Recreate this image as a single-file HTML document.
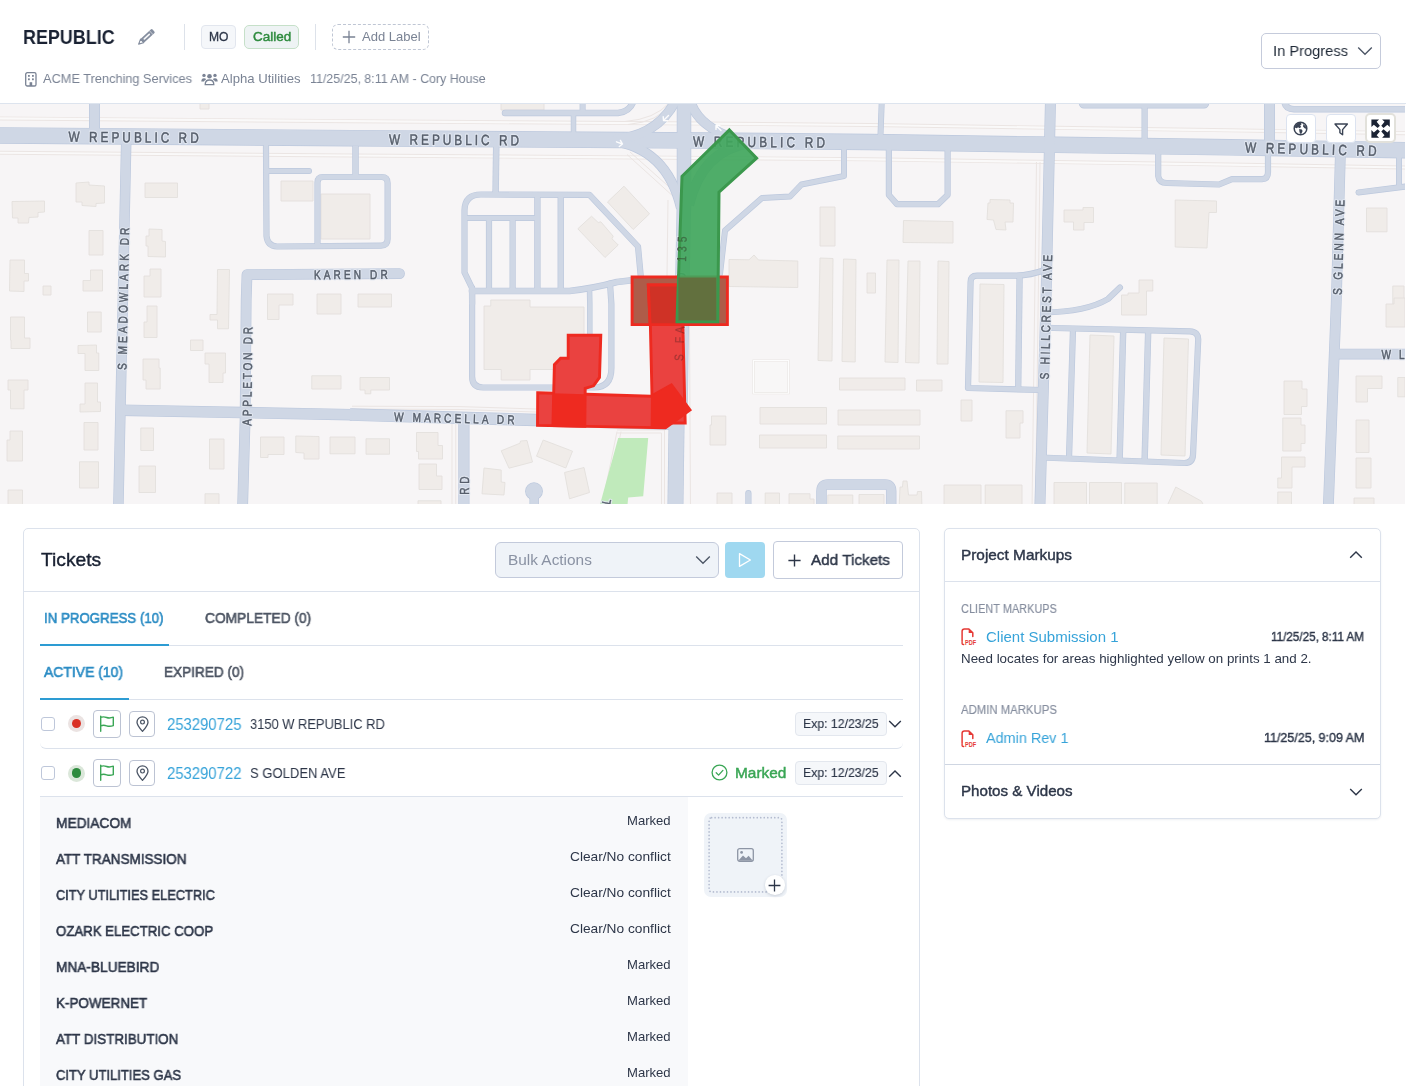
<!DOCTYPE html>
<html lang="en"><head><meta charset="utf-8"><title>REPUBLIC</title>
<style>
html,body{margin:0;padding:0;background:#fff;}
body{width:1406px;height:1086px;overflow:hidden;position:relative;font-family:"Liberation Sans",sans-serif;color:#2d3648;}
.t{will-change:transform;position:absolute;white-space:nowrap;line-height:1;transform-origin:0 0;font-family:"Liberation Sans",sans-serif;}
.a{position:absolute;box-sizing:border-box;}
svg{position:absolute;overflow:visible;}

</style></head>
<body>
<div class="a" style="left:0;top:0;width:1406px;height:103px;background:#fff"></div>
<span class="t" style="left:23.10px;top:26.87px;font-size:20px;color:#1a2233;font-weight:700;transform:scaleX(0.8970);">REPUBLIC</span>
<svg style="left:0;top:0" width="200" height="60" viewBox="0 0 200 60"><g transform="translate(138.4,44.3) rotate(-42.4)"><rect x="4.6" y="-2.6" width="15.8" height="5.2" rx="1.3" fill="#858e9f"/><rect x="7.2" y="-0.85" width="8.4" height="1.7" rx="0.85" fill="#fff" opacity="0.92"/><rect x="17" y="-2.6" width="0.7" height="5.2" fill="#fff" opacity="0.55"/><path d="M5,-2.35 L0.3,0 L5,2.35 Z" fill="#fff" stroke="#858e9f" stroke-width="1.1" stroke-linejoin="round"/><path d="M0.2,0 L2.2,-0.95 L2.2,0.95 Z" fill="#858e9f"/></g></svg>
<div class="a" style="left:184px;top:24.4px;width:1px;height:25.4px;background:#dde2ea"></div>
<div class="a" style="left:201px;top:25px;width:35.2px;height:24px;background:#f5f7fa;border:1px solid #e2e6ee;border-radius:4px"></div>
<span class="t" style="left:208.70px;top:31.14px;font-size:12px;color:#2d3648;-webkit-text-stroke:0.3px #2d3648;transform:scaleX(1.0081);">MO</span>
<div class="a" style="left:244px;top:25px;width:54.6px;height:24px;background:#eef3f4;border:1px solid #c6e0c9;border-radius:5px"></div>
<span class="t" style="left:252.60px;top:30.30px;font-size:13px;color:#2e8b3e;-webkit-text-stroke:0.45px #2e8b3e;transform:scaleX(1.0364);">Called</span>
<div class="a" style="left:315px;top:24.4px;width:1px;height:25.4px;background:#dde2ea"></div>
<div class="a" style="left:332.4px;top:24px;width:96.4px;height:25.7px;border:1px dashed #bfc6d4;border-radius:6px"></div>
<svg style="left:342px;top:30px" width="14" height="14" viewBox="0 0 14 14"><path d="M7,0.8 V13.2 M0.8,7 H13.2" stroke="#7a8394" stroke-width="1.3" fill="none"/></svg>
<span class="t" style="left:361.50px;top:30.30px;font-size:13px;color:#7a8394;">Add Label</span>
<svg style="left:25px;top:72px" width="12" height="15" viewBox="0 0 12 15"><rect x="0.7" y="0.7" width="10.3" height="13.3" rx="1.6" fill="none" stroke="#7a8394" stroke-width="1.3"/><g fill="#7a8394"><rect x="3" y="3" width="1.8" height="1.8"/><rect x="7" y="3" width="1.8" height="1.8"/><rect x="3" y="6.4" width="1.8" height="1.8"/><rect x="7" y="6.4" width="1.8" height="1.8"/><rect x="4.6" y="10.2" width="2.6" height="3.8"/></g></svg>
<span class="t" style="left:43.20px;top:71.80px;font-size:13px;color:#7a8394;transform:scaleX(0.9820);">ACME Trenching Services</span>
<svg style="left:201px;top:72px" width="17" height="14" viewBox="0 0 17 14"><g fill="#7a8394"><circle cx="8.5" cy="4.2" r="2.3"/><path d="M4.2,12.6 Q4.2,8 8.5,8 Q12.8,8 12.8,12.6 Z" fill="none" stroke="#7a8394" stroke-width="1.3"/><circle cx="3" cy="3.4" r="1.7"/><circle cx="14" cy="3.4" r="1.7"/><path d="M0.3,9.6 Q0.3,6.2 3,6.2 Q4.6,6.2 5.2,7.3 Q3.2,8.4 3,9.6 Z"/><path d="M16.7,9.6 Q16.7,6.2 14,6.2 Q12.4,6.2 11.8,7.3 Q13.8,8.4 14,9.6 Z"/></g></svg>
<span class="t" style="left:221.00px;top:71.80px;font-size:13px;color:#7a8394;transform:scaleX(1.0093);">Alpha Utilities</span>
<span class="t" style="left:309.80px;top:71.80px;font-size:13px;color:#7a8394;transform:scaleX(0.9559);">11/25/25, 8:11 AM - Cory House</span>
<div class="a" style="left:1261px;top:33px;width:119.6px;height:35.6px;border:1px solid #c5cbdb;border-radius:5px;background:#fff"></div>
<span class="t" style="left:1273.00px;top:43.30px;font-size:15px;color:#1f2937;transform:scaleX(0.9778);">In Progress</span>
<svg style="left:1357px;top:46px" width="16" height="10" viewBox="0 0 16 10"><path d="M1.2,1.5 L8,8.3 L14.8,1.5" fill="none" stroke="#4b5565" stroke-width="1.3"/></svg>
<svg style="left:0;top:103px;overflow:hidden;will-change:transform" width="1405" height="401" viewBox="0 103 1405 401" font-family="Liberation Sans, sans-serif">
<rect x="0" y="103" width="1405" height="401" fill="#f7f5f6"/>
<polyline points="-5,118.4 352,121.2 704,123.6 870,125.0 1056,127.8 1230,130.3 1410,133.3" fill="none" stroke="#ebe5e3" stroke-width="4"/>
<polyline points="-5,118.4 352,121.2 704,123.6 870,125.0 1056,127.8 1230,130.3 1410,133.3" fill="none" stroke="#faf9f9" stroke-width="2.2"/>
<polyline points="-5,152.7 352,155.5 704,157.9 870,159.3 1056,162.1 1230,164.6 1410,167.6" fill="none" stroke="#ebe5e3" stroke-width="4"/>
<polyline points="-5,152.7 352,155.5 704,157.9 870,159.3 1056,162.1 1230,164.6 1410,167.6" fill="none" stroke="#faf9f9" stroke-width="2.2"/>
<path d="M625,121.5 Q655,119 669,103" fill="none" stroke="#ebe5e3" stroke-width="1"/>
<path d="M628,124.5 Q658,122 672.5,103" fill="none" stroke="#ebe5e3" stroke-width="1"/>
<path d="M617,431.5 L601,510" fill="none" stroke="#ebe5e3" stroke-width="1"/>
<path d="M621,431.5 L605,510" fill="none" stroke="#ebe5e3" stroke-width="1"/>
<path d="M617,430 L664.5,430 L664.5,510" fill="none" stroke="#ebe5e3" stroke-width="1"/>
<path d="M617,433 L661.5,433 L661.5,510" fill="none" stroke="#ebe5e3" stroke-width="1"/>
<path d="M689.5,326 L690.5,510" fill="none" stroke="#ebe5e3" stroke-width="1"/>
<path d="M668,200 L667,276" fill="none" stroke="#ebe5e3" stroke-width="1"/>
<path d="M627,154.5 L674.5,197.5" fill="none" stroke="#ebe5e3" stroke-width="1"/>
<path d="M630,152 L676,193" fill="none" stroke="#ebe5e3" stroke-width="1"/>
<path d="M1036.5,162 L1032,510" fill="none" stroke="#ebe5e3" stroke-width="1"/>
<path d="M1040,162 L1035.5,510" fill="none" stroke="#ebe5e3" stroke-width="1"/>
<path d="M452,422 L452,510" fill="none" stroke="#ebe5e3" stroke-width="1"/>
<path d="M455.75,422 L455.75,510" fill="none" stroke="#ebe5e3" stroke-width="1"/>
<path d="M352,406.2 L460,406.6 L536,409" fill="none" stroke="#ebe5e3" stroke-width="1"/>
<path d="M352,409 L460,409.5 L536,412" fill="none" stroke="#ebe5e3" stroke-width="1"/>
<polygon points="618.2,438.0 648.2,438.0 643.2,496.2 628.2,497.5 627.0,510.0 598.5,510.0" fill="#c0eabb"/>
<g fill="#f0ece9" stroke="#e3e0dc" stroke-width="0.9" stroke-linejoin="miter">
<polygon points="76.0,183.0 89.0,182.0 89.0,185.0 104.5,186.0 104.5,203.0 96.0,203.5 96.0,206.5 82.0,205.5 82.0,202.0 76.0,202.0"/>
<polygon points="12.0,201.5 44.5,201.0 44.5,212.0 38.0,212.5 38.0,217.0 29.0,217.5 28.5,223.0 18.0,223.0 18.0,218.0 12.5,218.0"/>
<polygon points="145.0,183.0 177.5,183.0 177.5,197.5 145.0,197.5"/>
<polygon points="89.0,230.5 103.0,230.5 103.0,255.0 89.0,255.0"/>
<polygon points="149.0,229.0 162.0,229.5 162.0,241.0 165.5,241.5 165.5,257.0 148.0,256.5 148.0,246.0 146.0,246.0 146.0,236.0 149.0,236.0"/>
<polygon points="10.0,260.0 24.5,260.0 24.5,273.5 28.5,273.5 28.5,281.0 24.0,281.0 24.0,291.5 9.5,291.0"/>
<polygon points="43.0,286.0 51.0,286.0 51.0,295.0 43.0,295.0"/>
<polygon points="90.5,270.0 102.5,270.0 102.5,291.0 83.0,291.0 83.0,280.5 90.5,280.5"/>
<polygon points="150.0,269.0 161.0,269.0 161.0,297.0 144.0,297.0 144.0,276.0 150.0,276.0"/>
<polygon points="281.0,181.0 313.0,181.0 313.0,201.0 281.0,201.0"/>
<polygon points="321.0,194.0 370.0,194.0 370.0,239.0 321.0,239.0"/>
<polygon points="200.0,100.0 209.0,100.0 209.0,109.0 200.0,109.0"/>
<polygon points="10.5,317.0 24.5,317.0 24.5,338.0 30.0,338.0 30.0,348.5 11.0,348.5 11.0,340.0 10.5,340.0"/>
<polygon points="87.5,312.0 101.2,312.0 101.2,332.0 87.5,332.0"/>
<polygon points="78.0,345.5 96.5,345.0 96.5,353.0 98.8,353.0 98.8,370.5 85.0,370.5 85.0,353.5 78.0,353.5"/>
<polygon points="8.0,380.0 28.0,380.0 28.0,390.0 24.0,390.0 24.0,408.8 10.5,408.8 10.5,390.0 8.0,390.0"/>
<polygon points="85.0,383.0 97.5,383.0 97.5,402.0 100.5,402.0 100.5,411.5 80.0,412.0 80.0,404.0 85.0,404.0"/>
<polygon points="10.0,431.0 22.5,431.0 22.5,461.0 7.0,461.0 7.0,440.0 10.0,440.0"/>
<polygon points="84.0,422.5 98.0,422.5 98.0,450.0 84.0,450.0"/>
<polygon points="79.5,461.8 98.5,461.8 98.5,488.0 79.5,488.0"/>
<polygon points="8.0,490.0 22.5,490.0 22.5,510.0 8.0,510.0"/>
<polygon points="147.0,306.0 157.0,306.0 157.0,337.5 144.0,337.5 144.0,322.0 147.0,322.0"/>
<polygon points="143.0,359.0 159.0,359.0 159.0,368.0 160.2,368.0 160.2,389.0 146.0,389.0 146.0,380.0 143.0,380.0"/>
<polygon points="140.8,428.0 153.5,428.0 153.5,450.5 140.8,450.5"/>
<polygon points="139.0,466.0 155.5,466.0 155.5,492.5 139.0,492.5"/>
<polygon points="217.5,269.5 229.5,269.5 228.5,328.8 217.5,328.8 217.5,320.0 210.0,320.0 210.0,314.5 217.0,314.5"/>
<polygon points="190.5,340.0 203.0,340.0 203.0,350.5 190.5,350.5"/>
<polygon points="205.0,353.0 225.5,353.0 225.5,373.0 223.0,373.0 223.0,382.5 209.0,382.5 209.0,364.0 205.0,364.0"/>
<polygon points="209.5,439.0 224.0,439.0 224.0,469.0 209.5,469.0"/>
<polygon points="205.0,493.8 219.0,493.8 219.0,510.0 205.0,510.0"/>
<polygon points="267.5,294.0 293.0,294.0 293.0,305.0 279.0,305.0 279.0,319.5 267.5,319.5"/>
<polygon points="317.0,294.0 341.0,294.0 341.0,314.0 317.0,314.0"/>
<polygon points="311.8,375.8 341.0,375.8 341.0,389.0 311.8,389.0"/>
<polygon points="260.5,437.0 284.0,437.0 284.0,454.5 268.0,454.5 268.0,457.5 260.5,457.5"/>
<polygon points="295.8,436.0 319.0,436.5 319.0,459.0 304.0,459.0 304.0,453.0 295.8,452.5"/>
<polygon points="330.0,437.0 355.0,437.0 355.0,453.8 330.0,453.8"/>
<polygon points="358.0,294.0 391.5,294.0 391.5,307.0 358.0,307.0"/>
<polygon points="501.0,100.0 544.0,100.0 544.0,110.0 501.0,110.0"/>
<polygon points="607.5,202.0 624.0,186.2 649.5,213.8 633.2,229.5"/>
<polygon points="577.8,228.8 591.5,216.2 598.2,222.5 600.8,221.8 613.2,236.2 612.0,238.8 618.2,245.0 605.0,257.5"/>
<polygon points="484.0,306.0 490.8,306.0 490.8,300.0 530.0,300.0 530.0,307.0 584.0,307.0 584.0,369.5 530.0,369.5 530.0,380.0 501.2,380.0 501.2,369.5 484.0,369.5"/>
<polygon points="360.0,377.5 389.5,377.5 389.5,390.0 370.8,390.0 370.8,393.8 365.0,393.8 365.0,390.0 360.0,390.0"/>
<polygon points="366.0,438.8 389.5,438.8 389.5,454.2 366.0,454.2"/>
<polygon points="416.5,432.5 438.0,432.5 438.0,445.5 442.5,445.5 442.5,459.0 418.5,459.0 418.5,451.5 416.5,451.5"/>
<polygon points="419.0,464.0 436.5,464.0 436.5,476.0 442.0,476.0 442.0,489.5 419.0,489.5"/>
<polygon points="418.0,500.8 441.0,500.8 441.0,510.0 418.0,510.0"/>
<polygon points="501.2,450.8 520.0,443.2 520.5,441.0 527.0,440.5 532.5,462.0 509.0,468.2"/>
<polygon points="536.5,456.2 543.2,440.0 572.5,451.2 565.8,468.0"/>
<polygon points="482.0,493.8 484.0,468.0 501.2,470.0 501.2,482.0 505.0,482.5 504.0,495.0"/>
<polygon points="564.5,472.5 584.0,467.5 589.5,492.5 569.5,498.8"/>
<polygon points="820.0,207.0 835.0,207.0 835.0,246.0 820.0,246.0"/>
<polygon points="903.5,220.5 953.0,221.5 953.0,243.0 903.0,242.5"/>
<polygon points="990.0,199.5 1010.0,200.0 1010.0,203.0 1013.5,203.0 1013.0,222.0 1005.0,222.0 1006.0,230.0 996.0,229.5 993.5,220.0 987.0,219.5 988.0,203.0 990.0,203.0"/>
<polygon points="729.0,259.5 749.0,259.8 754.0,255.0 758.5,260.0 797.8,261.0 797.8,287.5 729.0,286.5"/>
<polygon points="820.0,258.0 833.0,258.5 832.0,361.0 818.0,360.5"/>
<polygon points="843.5,259.0 856.0,259.5 855.2,362.0 842.0,361.5"/>
<polygon points="867.0,273.0 875.5,273.0 875.5,293.0 867.0,293.0"/>
<polygon points="887.0,260.0 899.0,260.0 898.0,362.5 885.0,362.0"/>
<polygon points="908.0,261.0 920.0,261.0 919.0,363.0 905.5,362.5"/>
<polygon points="938.0,261.0 949.0,261.5 948.0,364.0 937.0,364.0"/>
<polygon points="980.0,284.0 1004.0,284.5 1003.0,382.5 979.0,382.0"/>
<polygon points="839.5,378.0 905.0,378.0 905.0,390.0 839.5,390.0"/>
<polygon points="916.5,380.0 942.0,380.0 942.0,391.0 916.5,391.0"/>
<polygon points="760.0,407.5 826.5,407.5 826.5,424.0 760.0,424.0"/>
<polygon points="838.0,410.0 920.0,410.0 920.0,425.0 838.0,425.0"/>
<polygon points="759.5,435.0 826.5,435.0 826.5,448.0 759.5,448.0"/>
<polygon points="837.8,436.0 919.5,436.0 919.5,449.0 837.8,449.0"/>
<polygon points="711.5,416.0 725.8,416.0 725.8,445.0 710.0,445.0 710.0,425.0 711.5,425.0"/>
<polygon points="961.0,400.0 972.0,400.0 972.0,421.0 961.0,421.0"/>
<polygon points="1006.0,410.8 1023.0,410.8 1023.0,423.0 1020.0,423.0 1020.0,438.0 1006.0,438.0"/>
<polygon points="717.0,493.0 732.0,493.0 732.0,510.0 717.0,510.0"/>
<polygon points="765.2,493.0 779.5,493.0 779.5,510.0 765.2,510.0"/>
<polygon points="789.0,493.8 810.0,493.8 810.0,499.0 814.0,499.0 814.0,510.0 789.0,510.0"/>
<polygon points="827.8,495.0 852.8,495.0 852.8,510.0 827.8,510.0"/>
<polygon points="859.0,494.5 884.0,494.5 884.0,510.0 859.0,510.0"/>
<polygon points="900.0,487.0 902.5,487.0 903.0,481.0 907.0,481.0 908.5,495.0 917.0,495.0 917.5,491.5 921.5,491.5 922.0,510.0 899.0,510.0"/>
<polygon points="944.0,485.0 981.0,485.0 981.0,510.0 944.0,510.0"/>
<polygon points="985.2,485.0 1022.0,485.0 1022.0,510.0 985.2,510.0"/>
<polygon points="1064.0,210.0 1083.0,210.0 1083.0,207.5 1093.5,207.5 1093.5,222.5 1084.0,222.5 1084.0,230.0 1073.5,230.0 1073.5,222.0 1064.0,222.0"/>
<polygon points="1175.2,200.0 1216.5,201.0 1216.5,212.5 1209.0,212.5 1207.0,248.0 1175.2,247.0"/>
<polygon points="1366.5,208.0 1387.0,208.0 1387.0,231.8 1366.5,231.8"/>
<polygon points="1392.8,286.0 1404.0,286.0 1404.0,304.0 1392.8,304.0"/>
<polygon points="1139.0,280.0 1152.8,280.0 1152.8,291.0 1146.5,291.0 1146.5,304.0 1146.5,315.0 1121.5,315.0 1121.5,295.0 1128.0,295.0 1128.0,293.0 1139.0,293.0"/>
<polygon points="1090.0,335.0 1114.0,336.0 1111.0,454.0 1087.0,453.0"/>
<polygon points="1164.0,338.0 1188.5,339.0 1185.0,456.0 1161.0,455.0"/>
<polygon points="1386.0,304.0 1394.0,304.0 1394.0,298.0 1405.0,298.0 1405.0,327.0 1386.0,327.0"/>
<polygon points="1284.0,381.0 1302.0,381.0 1302.0,389.0 1307.0,389.0 1307.0,406.5 1301.5,406.5 1301.5,414.5 1284.0,414.5"/>
<polygon points="1282.8,418.0 1301.0,418.0 1301.0,425.0 1305.0,425.0 1305.0,443.5 1301.0,443.5 1301.0,451.0 1282.8,451.0"/>
<polygon points="1281.5,457.0 1305.0,457.0 1305.0,467.0 1292.0,467.0 1292.0,488.0 1277.8,488.0 1277.8,478.0 1281.5,478.0"/>
<polygon points="1277.8,492.0 1291.5,492.0 1291.5,510.0 1277.8,510.0"/>
<polygon points="1356.0,376.0 1382.0,376.0 1382.0,388.5 1367.5,388.5 1367.5,402.0 1356.0,402.0"/>
<polygon points="1397.8,377.5 1405.0,377.5 1405.0,396.8 1397.8,396.8"/>
<polygon points="1356.0,420.0 1369.0,420.0 1369.0,452.5 1356.0,452.5"/>
<polygon points="1356.0,458.0 1371.0,458.0 1371.0,488.0 1356.0,488.0"/>
<polygon points="1354.0,498.0 1374.0,498.0 1374.0,510.0 1354.0,510.0"/>
<polygon points="1054.0,482.5 1086.5,482.5 1086.5,510.0 1054.0,510.0"/>
<polygon points="1089.5,482.5 1121.5,482.5 1121.5,510.0 1089.5,510.0"/>
<polygon points="1124.8,483.0 1157.2,483.0 1157.2,510.0 1124.8,510.0"/>
<polygon points="1165.2,510.0 1175.8,487.0 1201.5,501.2 1206.0,510.0"/>
</g>
<polygon points="753.5,360.5 788.5,360.5 788.5,393.2 753.5,393.2" fill="#f8f7f7" stroke="#e9e6e3" stroke-width="2.2"/>
<polygon points="753.5,360.5 788.5,360.5 788.5,393.2 753.5,393.2" fill="none" stroke="#fdfdfd" stroke-width="1.1"/>
<g fill="none" stroke="#bcc8dd" stroke-linejoin="round">
<path d="M-5,135.4 L352,138.2 L704,140.6 L870,142 L1056,144.8 L1230,147.3 L1410,150.3" stroke-width="16.5" stroke-linecap="butt"/>
<path d="M684,100 L684,200 L682,300 L680.5,412" stroke-width="14.5" stroke-linecap="butt"/>
<path d="M676.7,412 L675.4,510" stroke-width="16" stroke-linecap="butt"/>
<path d="M612,139.5 Q657,137 676,100" stroke-width="10" stroke-linecap="butt"/>
<path d="M612,141 C650,146 672,170 681,208" stroke-width="10" stroke-linecap="butt"/>
<path d="M690,100 Q697,126 735,139" stroke-width="10" stroke-linecap="butt"/>
<path d="M750,143 Q702,150 689,205" stroke-width="10" stroke-linecap="butt"/>
<path d="M94.5,100 L94.5,132" stroke-width="11" stroke-linecap="butt"/>
<path d="M126.3,138 L122.75,304 L118.3,510" stroke-width="10.5" stroke-linecap="butt"/>
<path d="M120,410.2 L352,414.7" stroke-width="11.5" stroke-linecap="butt"/>
<path d="M350,414.6 L536,420 L680,424" stroke-width="12.5" stroke-linecap="butt"/>
<path d="M242.5,510 L245.1,420 L246.2,300 L247,274.6 L399.5,273.6" stroke-width="10.8" stroke-linecap="round"/>
<path d="M505,112.9 L618,112.9 Q630,112 634,100" stroke-width="6.5" stroke-linecap="round"/>
<path d="M573.5,113 L573.5,133" stroke-width="5.5" stroke-linecap="butt"/>
<path d="M582.6,113 L582.6,100" stroke-width="6" stroke-linecap="butt"/>
<path d="M496.25,145 L495.6,194.5" stroke-width="6.5" stroke-linecap="butt"/>
<path d="M472.1,304 L472,288 L464.5,272.5 L464.5,210 Q465,194.5 481,194.5 L589.5,194.8 L638,246.5 L641,279" stroke-width="6.2" stroke-linecap="round"/>
<path d="M464.5,218 L537,218" stroke-width="6.0" stroke-linecap="butt"/>
<path d="M489,218 L489,291" stroke-width="6.2" stroke-linecap="butt"/>
<path d="M512.6,218 L512.6,291" stroke-width="6.2" stroke-linecap="butt"/>
<path d="M537.4,194.5 L537.4,291" stroke-width="6.4" stroke-linecap="butt"/>
<path d="M560.75,194.5 L560.75,291" stroke-width="6.4" stroke-linecap="butt"/>
<path d="M472,291 L569.5,291 Q595,288 617,282 L634,280" stroke-width="6.6" stroke-linecap="round"/>
<path d="M589.5,288 L589.8,304 L589.8,336" stroke-width="5.5" stroke-linecap="butt"/>
<path d="M610,283.5 L611.4,304 L611.4,368 Q611.4,387.5 594,387.5 L483,387.5 Q472.1,387.5 472.1,376.6 L472.1,288" stroke-width="6.2" stroke-linecap="round"/>
<path d="M266,146 L266.5,236 Q267.5,246 277,246.5 L381,245.6 Q387.6,245.4 387.6,239 L387.6,183 Q387.6,177 381.6,177 L323,177 Q317.5,177 317.5,182.5 L317.5,246" stroke-width="6.2" stroke-linecap="round"/>
<path d="M355.5,146 L355.5,177" stroke-width="6.5" stroke-linecap="butt"/>
<path d="M266,171 L309,171" stroke-width="6" stroke-linecap="round"/>
<path d="M844,150 L844,176 L801.5,184.5 L790,196.5 L762,198 L725,230.5 L720,274" stroke-width="6" stroke-linecap="round"/>
<path d="M888.9,150 L888.9,195 L897,204.2 L938,204.2 L947.6,195 L947.6,150" stroke-width="6.2" stroke-linecap="round"/>
<path d="M881.8,100 L880.5,135" stroke-width="6" stroke-linecap="butt"/>
<path d="M1050.5,100 L1046,300 L1043,400 L1039.8,510" stroke-width="11" stroke-linecap="butt"/>
<path d="M1084,103.2 L1204,103.2" stroke-width="10.5" stroke-linecap="round"/>
<path d="M1144.6,106 L1144.6,140" stroke-width="6.2" stroke-linecap="butt"/>
<path d="M1269.5,100 L1269.5,142" stroke-width="11" stroke-linecap="butt"/>
<path d="M1284,100 Q1285,109.2 1294,109.2 L1410,109.2" stroke-width="6.5" stroke-linecap="butt"/>
<path d="M1158.2,152 L1158.2,176 Q1159,183 1167,183 L1219,184.5 L1232,179.2 L1262,179.2 Q1268,179 1268,172 L1268,152" stroke-width="6.2" stroke-linecap="round"/>
<path d="M1340.5,150 L1336.2,304 L1328.2,510" stroke-width="10.8" stroke-linecap="butt"/>
<path d="M1399,156 L1399,188" stroke-width="6" stroke-linecap="butt"/>
<path d="M1358.5,192.4 L1410,186" stroke-width="6" stroke-linecap="round"/>
<path d="M1335,354 L1410,354" stroke-width="10.75" stroke-linecap="butt"/>
<path d="M1044,327.6 L1054,328 L1190,331.4 Q1198.6,331.8 1198.2,340 L1193,455 Q1192.5,463.2 1184,463 L1054,458 L1040,457.5" stroke-width="6.2" stroke-linecap="round"/>
<path d="M1073,329 L1069,458.5" stroke-width="6.2" stroke-linecap="butt"/>
<path d="M1123.2,330 L1119.6,460.5" stroke-width="6.4" stroke-linecap="butt"/>
<path d="M1148.2,330.5 L1144.6,461.5" stroke-width="6.4" stroke-linecap="butt"/>
<path d="M1044,312.4 Q1086,312 1108,299 L1120,287.5" stroke-width="6" stroke-linecap="round"/>
<path d="M1046,269.5 Q1030,275.6 1015,275.6 L977,275.6 Q970.6,275.6 970.6,282 L968,388 L1041,390" stroke-width="6.2" stroke-linecap="round"/>
<path d="M1019.6,275.6 L1018.2,389" stroke-width="6.3" stroke-linecap="butt"/>
<path d="M821.5,510 L821.5,491 Q821.5,484.4 828,484.4 L885,484.4 Q891.2,484.4 891.2,491 L891.2,510" stroke-width="10.5" stroke-linecap="round"/>
<path d="M748.4,493.2 L748.4,510" stroke-width="6.2" stroke-linecap="round"/>
<path d="M463.9,420 L463.9,510" stroke-width="11.2" stroke-linecap="butt"/>
<path d="M534.2,495 L534.2,510" stroke-width="9.5" stroke-linecap="butt"/>
</g>
<circle cx="534" cy="491.25" r="8.9" fill="#bcc8dd"/>
<g fill="none" stroke="#cfd7e5" stroke-linejoin="round">
<path d="M-5,135.4 L352,138.2 L704,140.6 L870,142 L1056,144.8 L1230,147.3 L1410,150.3" stroke-width="15.20" stroke-linecap="butt"/>
<path d="M684,100 L684,200 L682,300 L680.5,412" stroke-width="13.20" stroke-linecap="butt"/>
<path d="M676.7,412 L675.4,510" stroke-width="14.70" stroke-linecap="butt"/>
<path d="M612,139.5 Q657,137 676,100" stroke-width="8.70" stroke-linecap="butt"/>
<path d="M612,141 C650,146 672,170 681,208" stroke-width="8.70" stroke-linecap="butt"/>
<path d="M690,100 Q697,126 735,139" stroke-width="8.70" stroke-linecap="butt"/>
<path d="M750,143 Q702,150 689,205" stroke-width="8.70" stroke-linecap="butt"/>
<path d="M94.5,100 L94.5,132" stroke-width="9.70" stroke-linecap="butt"/>
<path d="M126.3,138 L122.75,304 L118.3,510" stroke-width="9.20" stroke-linecap="butt"/>
<path d="M120,410.2 L352,414.7" stroke-width="10.20" stroke-linecap="butt"/>
<path d="M350,414.6 L536,420 L680,424" stroke-width="11.20" stroke-linecap="butt"/>
<path d="M242.5,510 L245.1,420 L246.2,300 L247,274.6 L399.5,273.6" stroke-width="9.50" stroke-linecap="round"/>
<path d="M505,112.9 L618,112.9 Q630,112 634,100" stroke-width="5.20" stroke-linecap="round"/>
<path d="M573.5,113 L573.5,133" stroke-width="4.20" stroke-linecap="butt"/>
<path d="M582.6,113 L582.6,100" stroke-width="4.70" stroke-linecap="butt"/>
<path d="M496.25,145 L495.6,194.5" stroke-width="5.20" stroke-linecap="butt"/>
<path d="M472.1,304 L472,288 L464.5,272.5 L464.5,210 Q465,194.5 481,194.5 L589.5,194.8 L638,246.5 L641,279" stroke-width="4.90" stroke-linecap="round"/>
<path d="M464.5,218 L537,218" stroke-width="4.70" stroke-linecap="butt"/>
<path d="M489,218 L489,291" stroke-width="4.90" stroke-linecap="butt"/>
<path d="M512.6,218 L512.6,291" stroke-width="4.90" stroke-linecap="butt"/>
<path d="M537.4,194.5 L537.4,291" stroke-width="5.10" stroke-linecap="butt"/>
<path d="M560.75,194.5 L560.75,291" stroke-width="5.10" stroke-linecap="butt"/>
<path d="M472,291 L569.5,291 Q595,288 617,282 L634,280" stroke-width="5.30" stroke-linecap="round"/>
<path d="M589.5,288 L589.8,304 L589.8,336" stroke-width="4.20" stroke-linecap="butt"/>
<path d="M610,283.5 L611.4,304 L611.4,368 Q611.4,387.5 594,387.5 L483,387.5 Q472.1,387.5 472.1,376.6 L472.1,288" stroke-width="4.90" stroke-linecap="round"/>
<path d="M266,146 L266.5,236 Q267.5,246 277,246.5 L381,245.6 Q387.6,245.4 387.6,239 L387.6,183 Q387.6,177 381.6,177 L323,177 Q317.5,177 317.5,182.5 L317.5,246" stroke-width="4.90" stroke-linecap="round"/>
<path d="M355.5,146 L355.5,177" stroke-width="5.20" stroke-linecap="butt"/>
<path d="M266,171 L309,171" stroke-width="4.70" stroke-linecap="round"/>
<path d="M844,150 L844,176 L801.5,184.5 L790,196.5 L762,198 L725,230.5 L720,274" stroke-width="4.70" stroke-linecap="round"/>
<path d="M888.9,150 L888.9,195 L897,204.2 L938,204.2 L947.6,195 L947.6,150" stroke-width="4.90" stroke-linecap="round"/>
<path d="M881.8,100 L880.5,135" stroke-width="4.70" stroke-linecap="butt"/>
<path d="M1050.5,100 L1046,300 L1043,400 L1039.8,510" stroke-width="9.70" stroke-linecap="butt"/>
<path d="M1084,103.2 L1204,103.2" stroke-width="9.20" stroke-linecap="round"/>
<path d="M1144.6,106 L1144.6,140" stroke-width="4.90" stroke-linecap="butt"/>
<path d="M1269.5,100 L1269.5,142" stroke-width="9.70" stroke-linecap="butt"/>
<path d="M1284,100 Q1285,109.2 1294,109.2 L1410,109.2" stroke-width="5.20" stroke-linecap="butt"/>
<path d="M1158.2,152 L1158.2,176 Q1159,183 1167,183 L1219,184.5 L1232,179.2 L1262,179.2 Q1268,179 1268,172 L1268,152" stroke-width="4.90" stroke-linecap="round"/>
<path d="M1340.5,150 L1336.2,304 L1328.2,510" stroke-width="9.50" stroke-linecap="butt"/>
<path d="M1399,156 L1399,188" stroke-width="4.70" stroke-linecap="butt"/>
<path d="M1358.5,192.4 L1410,186" stroke-width="4.70" stroke-linecap="round"/>
<path d="M1335,354 L1410,354" stroke-width="9.45" stroke-linecap="butt"/>
<path d="M1044,327.6 L1054,328 L1190,331.4 Q1198.6,331.8 1198.2,340 L1193,455 Q1192.5,463.2 1184,463 L1054,458 L1040,457.5" stroke-width="4.90" stroke-linecap="round"/>
<path d="M1073,329 L1069,458.5" stroke-width="4.90" stroke-linecap="butt"/>
<path d="M1123.2,330 L1119.6,460.5" stroke-width="5.10" stroke-linecap="butt"/>
<path d="M1148.2,330.5 L1144.6,461.5" stroke-width="5.10" stroke-linecap="butt"/>
<path d="M1044,312.4 Q1086,312 1108,299 L1120,287.5" stroke-width="4.70" stroke-linecap="round"/>
<path d="M1046,269.5 Q1030,275.6 1015,275.6 L977,275.6 Q970.6,275.6 970.6,282 L968,388 L1041,390" stroke-width="4.90" stroke-linecap="round"/>
<path d="M1019.6,275.6 L1018.2,389" stroke-width="5.00" stroke-linecap="butt"/>
<path d="M821.5,510 L821.5,491 Q821.5,484.4 828,484.4 L885,484.4 Q891.2,484.4 891.2,491 L891.2,510" stroke-width="9.20" stroke-linecap="round"/>
<path d="M748.4,493.2 L748.4,510" stroke-width="4.90" stroke-linecap="round"/>
<path d="M463.9,420 L463.9,510" stroke-width="9.90" stroke-linecap="butt"/>
<path d="M534.2,495 L534.2,510" stroke-width="8.20" stroke-linecap="butt"/>
</g>
<circle cx="534" cy="491.25" r="8.25" fill="#cfd7e5"/>
<g fill="none" stroke="#ffffff" stroke-width="1.4" stroke-linecap="round" stroke-linejoin="round" opacity="0.95">
<path d="M668.5,115.5 L663.5,120.5 M663.2,116.6 L663.5,120.5 L667.4,120.8"/>
<path d="M616.5,141.8 L622.5,144 M619.3,146.5 L622.5,144 L620.4,140.4"/>
<path d="M721,130.5 L716,125.5 M716,129.4 L716,125.5 L719.9,125.5"/>
</g>
<text x="0" y="0" font-size="14.7" textLength="162.7" lengthAdjust="spacing" transform="translate(68.5 141.8) rotate(0.45) scale(0.8 1)" fill="none" stroke="#e4e9f2" stroke-width="2.8" stroke-linejoin="round" opacity="0.9">W REPUBLIC RD</text><text x="0" y="0" font-size="14.7" textLength="162.7" lengthAdjust="spacing" transform="translate(68.5 141.8) rotate(0.45) scale(0.8 1)" fill="#565e6b" stroke="#565e6b" stroke-width="0.5">W REPUBLIC RD</text>
<text x="0" y="0" font-size="14.7" textLength="162.5" lengthAdjust="spacing" transform="translate(389 144.5) rotate(0.35) scale(0.8 1)" fill="none" stroke="#e4e9f2" stroke-width="2.8" stroke-linejoin="round" opacity="0.9">W REPUBLIC RD</text><text x="0" y="0" font-size="14.7" textLength="162.5" lengthAdjust="spacing" transform="translate(389 144.5) rotate(0.35) scale(0.8 1)" fill="#565e6b" stroke="#565e6b" stroke-width="0.5">W REPUBLIC RD</text>
<text x="0" y="0" font-size="14.7" textLength="165.0" lengthAdjust="spacing" transform="translate(693 146.6) rotate(0.45) scale(0.8 1)" fill="none" stroke="#e4e9f2" stroke-width="2.8" stroke-linejoin="round" opacity="0.9">W REPUBLIC RD</text><text x="0" y="0" font-size="14.7" textLength="165.0" lengthAdjust="spacing" transform="translate(693 146.6) rotate(0.45) scale(0.8 1)" fill="#565e6b" stroke="#565e6b" stroke-width="0.5">W REPUBLIC RD</text>
<text x="0" y="0" font-size="14.7" textLength="164.4" lengthAdjust="spacing" transform="translate(1245 152.5) rotate(1.5) scale(0.8 1)" fill="none" stroke="#e4e9f2" stroke-width="2.8" stroke-linejoin="round" opacity="0.9">W REPUBLIC RD</text><text x="0" y="0" font-size="14.7" textLength="164.4" lengthAdjust="spacing" transform="translate(1245 152.5) rotate(1.5) scale(0.8 1)" fill="#565e6b" stroke="#565e6b" stroke-width="0.5">W REPUBLIC RD</text>
<text x="0" y="0" font-size="12.6" textLength="92.1" lengthAdjust="spacing" transform="translate(314 279.2) rotate(-0.3) scale(0.8 1)" fill="none" stroke="#e4e9f2" stroke-width="2.8" stroke-linejoin="round" opacity="0.9">KAREN DR</text><text x="0" y="0" font-size="12.6" textLength="92.1" lengthAdjust="spacing" transform="translate(314 279.2) rotate(-0.3) scale(0.8 1)" fill="#565e6b" stroke="#565e6b" stroke-width="0.5">KAREN DR</text>
<text x="0" y="0" font-size="12.6" textLength="178.0" lengthAdjust="spacing" transform="translate(126.4 370) rotate(-88.95) scale(0.8 1)" fill="none" stroke="#e4e9f2" stroke-width="2.8" stroke-linejoin="round" opacity="0.9">S MEADOWLARK DR</text><text x="0" y="0" font-size="12.6" textLength="178.0" lengthAdjust="spacing" transform="translate(126.4 370) rotate(-88.95) scale(0.8 1)" fill="#565e6b" stroke="#565e6b" stroke-width="0.5">S MEADOWLARK DR</text>
<text x="0" y="0" font-size="12.6" textLength="123.4" lengthAdjust="spacing" transform="translate(251.3 425.75) rotate(-89.4) scale(0.8 1)" fill="none" stroke="#e4e9f2" stroke-width="2.8" stroke-linejoin="round" opacity="0.9">APPLETON DR</text><text x="0" y="0" font-size="12.6" textLength="123.4" lengthAdjust="spacing" transform="translate(251.3 425.75) rotate(-89.4) scale(0.8 1)" fill="#565e6b" stroke="#565e6b" stroke-width="0.5">APPLETON DR</text>
<text x="0" y="0" font-size="12.6" textLength="150.6" lengthAdjust="spacing" transform="translate(394 421.3) rotate(1.43) scale(0.8 1)" fill="none" stroke="#e4e9f2" stroke-width="2.8" stroke-linejoin="round" opacity="0.9">W MARCELLA DR</text><text x="0" y="0" font-size="12.6" textLength="150.6" lengthAdjust="spacing" transform="translate(394 421.3) rotate(1.43) scale(0.8 1)" fill="#565e6b" stroke="#565e6b" stroke-width="0.5">W MARCELLA DR</text>
<text x="0" y="0" font-size="12.6" textLength="155.6" lengthAdjust="spacing" transform="translate(1048.8 379.5) rotate(-88.44) scale(0.8 1)" fill="none" stroke="#e4e9f2" stroke-width="2.8" stroke-linejoin="round" opacity="0.9">S HILLCREST AVE</text><text x="0" y="0" font-size="12.6" textLength="155.6" lengthAdjust="spacing" transform="translate(1048.8 379.5) rotate(-88.44) scale(0.8 1)" fill="#565e6b" stroke="#565e6b" stroke-width="0.5">S HILLCREST AVE</text>
<text x="0" y="0" font-size="12.6" textLength="118.8" lengthAdjust="spacing" transform="translate(1341.7 295) rotate(-88.4) scale(0.8 1)" fill="none" stroke="#e4e9f2" stroke-width="2.8" stroke-linejoin="round" opacity="0.9">S GLENN AVE</text><text x="0" y="0" font-size="12.6" textLength="118.8" lengthAdjust="spacing" transform="translate(1341.7 295) rotate(-88.4) scale(0.8 1)" fill="#565e6b" stroke="#565e6b" stroke-width="0.5">S GLENN AVE</text>
<text x="0" y="0" font-size="12.6" letter-spacing="3.2" transform="translate(1381.5 358.8) scale(0.8 1)" fill="none" stroke="#e4e9f2" stroke-width="2.8" stroke-linejoin="round" opacity="0.9">W LARK</text><text x="0" y="0" font-size="12.6" letter-spacing="3.2" transform="translate(1381.5 358.8) scale(0.8 1)" fill="#565e6b" stroke="#565e6b" stroke-width="0.5">W LARK</text>
<text x="0" y="0" font-size="12.6" textLength="43.8" lengthAdjust="spacing" transform="translate(468.6 511.5) rotate(-90) scale(0.8 1)" fill="none" stroke="#e4e9f2" stroke-width="2.8" stroke-linejoin="round" opacity="0.9">S RD</text><text x="0" y="0" font-size="12.6" textLength="43.8" lengthAdjust="spacing" transform="translate(468.6 511.5) rotate(-90) scale(0.8 1)" fill="#565e6b" stroke="#565e6b" stroke-width="0.5">S RD</text>
<text x="0" y="0" font-size="12.6" textLength="155.6" lengthAdjust="spacing" transform="translate(683.2 361) rotate(-88.4) scale(0.8 1)" fill="none" stroke="#e4e9f2" stroke-width="2.8" stroke-linejoin="round" opacity="0.9">S FARM RD 135</text><text x="0" y="0" font-size="12.6" textLength="155.6" lengthAdjust="spacing" transform="translate(683.2 361) rotate(-88.4) scale(0.8 1)" fill="#565e6b" stroke="#565e6b" stroke-width="0.5">S FARM RD 135</text>
<text x="0" y="0" font-size="12" letter-spacing="3.2" transform="translate(610 505) rotate(-78) scale(0.8 1)" fill="none" stroke="#e4e9f2" stroke-width="2.8" stroke-linejoin="round" opacity="0.9">L</text><text x="0" y="0" font-size="12" letter-spacing="3.2" transform="translate(610 505) rotate(-78) scale(0.8 1)" fill="#565e6b" stroke="#565e6b" stroke-width="0.5">L</text>
<g stroke="#ee2a20" stroke-width="2.9" stroke-linejoin="miter">
<polygon points="632.1,277.0 727.4,277.0 727.4,324.6 632.1,324.6" fill="#ae5c49"/>
<polygon points="648.3,285.0 682.6,285.0 682.9,326.5 685.2,423.0 668.0,423.0 652.0,395.0 650.4,326.5" fill="#ea4240"/>
<polygon points="648.3,285.0 682.6,285.0 682.8,324.6 650.1,324.6" fill="#cf3226"/>
<polygon points="537.7,392.8 651.0,396.3 671.4,384.8 690.0,410.0 665.5,427.9 537.5,425.4" fill="#ea4240"/>
<polygon points="568.2,335.2 600.8,335.2 599.5,377.4 593.5,385.8 585.2,388.4 584.8,426.3 552.9,425.7 554.4,364.7 560.6,358.2 568.2,358.2" fill="#ea4240"/>
</g>
<polygon points="552.6,393.2 585.2,394.2 584.8,426.6 552.6,426.0" fill="#ee2a20"/>
<polygon points="651.0,396.0 671.4,384.3 690.6,410.0 665.5,428.4 650.6,428.1" fill="#ee2a20"/>
<polygon points="729.4,130.0 756.6,158.1 719.0,192.2 717.8,321.8 677.0,321.8 682.0,176.3" fill="rgb(64,166,92)" fill-opacity="0.92" stroke="#3b984d" stroke-width="3" stroke-linejoin="miter"/>
<polygon points="678.4,277.6 716.4,277.6 716.4,320.4 678.4,320.4" fill="rgb(98,112,62)"/>
<text x="0" y="0" font-size="12.6" fill="rgba(60,30,30,0.32)" stroke="rgba(60,30,30,0.2)" stroke-width="0.4" letter-spacing="5.208" transform="translate(683.20 361.00) rotate(-88.4) scale(0.8 1)">S FA</text>
<text x="0" y="0" font-size="12.6" fill="rgba(60,30,30,0.32)" stroke="rgba(60,30,30,0.2)" stroke-width="0.4" letter-spacing="5.208" transform="translate(685.97 261.69) rotate(-88.4) scale(0.8 1)">135</text>
</svg>
<div class="a" style="left:1286.2px;top:113.5px;width:29.6px;height:29.2px;background:#fff;border:1.5px solid #dce3f0;border-radius:4px"></div>
<svg style="left:1293.4px;top:121.2px" width="15" height="15" viewBox="0 0 15 15"><circle cx="7.5" cy="7.5" r="6.3" fill="#fff" stroke="#3a4354" stroke-width="1.5"/><path d="M2.4,4 Q4.6,1.8 7.6,1.6 L8.6,3.2 L7.2,4.6 L8.2,6 L6.4,7.2 L5.2,6.2 L3.6,7.2 L1.8,6.4 Z M6.2,8 L8.8,8.4 L9.6,10 L8.2,12.9 L7,12.6 L6.4,10.6 Z M10.4,3 L12.9,5.4 L13.3,8 L11.6,7.2 L10,5.4 Z" fill="#3a4354"/></svg>
<div class="a" style="left:1326.1px;top:113.5px;width:29.6px;height:29.2px;background:#fff;border:1.5px solid #dce3f0;border-radius:4px"></div>
<svg style="left:1334px;top:122.6px" width="15" height="13" viewBox="0 0 15 13"><path d="M1,1 H13.4 L8.6,6.6 V11.8 L5.9,9.8 V6.6 Z" fill="none" stroke="#3a4354" stroke-width="1.4" stroke-linejoin="round"/></svg>
<div class="a" style="left:1364.9px;top:112.6px;width:30.7px;height:30.6px;background:#fff;border:2px solid #e2e1db;border-radius:5px"></div>
<svg style="left:1370.8px;top:118.6px" width="19.2" height="19.2" viewBox="0 0 19 19"><g fill="#1a2233"><path d="M0.4,0.4 H8 L5.6,2.8 L8.8,6.6 L6.6,8.8 L2.8,5.6 L0.4,8 Z"/><path d="M18.6,0.4 V8 L16.2,5.6 L12.4,8.8 L10.2,6.6 L13.4,2.8 L11,0.4 Z"/><path d="M0.4,18.6 V11 L2.8,13.4 L6.6,10.2 L8.8,12.4 L5.6,16.2 L8,18.6 Z"/><path d="M18.6,18.6 H11 L13.4,16.2 L10.2,12.4 L12.4,10.2 L16.2,13.4 L18.6,11 Z"/></g></svg>
<div class="a" style="left:0;top:103px;width:1406px;height:1px;background:#dde4ee"></div>
<div class="a" style="left:23px;top:528px;width:897px;height:600px;border:1px solid #dce2ec;border-radius:5px;background:#fff"></div>
<span class="t" style="left:40.50px;top:550.17px;font-size:19px;color:#1a2233;-webkit-text-stroke:0.4px #1a2233;transform:scaleX(1.0131);">Tickets</span>
<div class="a" style="left:24px;top:591px;width:895px;height:1px;background:#dce2ec"></div>
<div class="a" style="left:495px;top:542px;width:223.5px;height:36px;background:#eff3f8;border:1px solid #c3cadb;border-radius:6px"></div>
<span class="t" style="left:507.60px;top:552.36px;font-size:15.4px;color:#8a92a3;transform:scaleX(0.9947);">Bulk Actions</span>
<svg style="left:695px;top:555px" width="16" height="10" viewBox="0 0 16 10"><path d="M1.2,1.5 L8,8.3 L14.8,1.5" fill="none" stroke="#4b5565" stroke-width="1.3"/></svg>
<div class="a" style="left:725px;top:542px;width:40px;height:36px;background:#9fd8f0;border-radius:4px"></div>
<svg style="left:738px;top:552px" width="14" height="16" viewBox="0 0 14 16"><path d="M1.5,1.6 L12.4,8 L1.5,14.4 Z" fill="none" stroke="#fff" stroke-width="1.3" stroke-linejoin="round"/></svg>
<div class="a" style="left:773.2px;top:541.2px;width:129.8px;height:37.6px;background:#fff;border:1px solid #c3cadb;border-radius:4px"></div>
<svg style="left:787.5px;top:553.5px" width="13" height="13" viewBox="0 0 13 13"><path d="M6.5,0.4 V12.6 M0.4,6.5 H12.6" stroke="#2d3648" stroke-width="1.4" fill="none"/></svg>
<span class="t" style="left:811.00px;top:552.36px;font-size:15.4px;color:#2d3648;-webkit-text-stroke:0.45px #2d3648;transform:scaleX(0.9929);">Add Tickets</span>
<span class="t" style="left:44.25px;top:610.81px;font-size:14.4px;color:#2b8cc4;-webkit-text-stroke:0.6px #2b8cc4;transform:scaleX(0.9224);">IN PROGRESS (10)</span>
<span class="t" style="left:204.50px;top:610.81px;font-size:14.4px;color:#4d5563;-webkit-text-stroke:0.6px #4d5563;transform:scaleX(0.9559);">COMPLETED (0)</span>
<div class="a" style="left:40px;top:645px;width:863px;height:1px;background:#dce2ec"></div>
<div class="a" style="left:40px;top:643.5px;width:128.75px;height:2px;background:#2d9cd3"></div>
<span class="t" style="left:44.25px;top:664.81px;font-size:14.4px;color:#2b8cc4;-webkit-text-stroke:0.6px #2b8cc4;transform:scaleX(0.9684);">ACTIVE (10)</span>
<span class="t" style="left:164.25px;top:664.81px;font-size:14.4px;color:#4d5563;-webkit-text-stroke:0.6px #4d5563;transform:scaleX(0.9438);">EXPIRED (0)</span>
<div class="a" style="left:40px;top:699px;width:863px;height:1px;background:#dce2ec"></div>
<div class="a" style="left:40px;top:697.5px;width:88.75px;height:2px;background:#2d9cd3"></div>
<div class="a" style="left:41.1px;top:717.0px;width:13.9px;height:13.9px;border:1.7px solid #bec7da;border-radius:3px;background:#fff"></div>
<div class="a" style="left:68px;top:715.3px;width:17px;height:17px;border-radius:50%;background:#ebe3e2"></div>
<div class="a" style="left:71.8px;top:719.0999999999999px;width:9.4px;height:9.4px;border-radius:50%;background:#d93025"></div>
<div class="a" style="left:93px;top:710.0px;width:27.8px;height:27.8px;border:1px solid #bcc3d3;border-radius:4px;background:#fff"></div>
<svg style="left:99px;top:715.0px" width="17" height="17" viewBox="0 0 17 17"><path d="M1.7,16.2 V1.2 M1.7,2.3 Q4.6,1.4 7.6,2.5 T14.3,2.2 V10.6 Q10.8,11.9 7.6,10.8 T1.7,10.9" fill="none" stroke="#3aa655" stroke-width="1.4" stroke-linejoin="round" stroke-linecap="round"/></svg>
<div class="a" style="left:129px;top:710.9px;width:25.8px;height:25.9px;border:1px solid #bcc3d3;border-radius:4px;background:#fff"></div>
<svg style="left:135.6px;top:715.5px" width="13" height="17" viewBox="0 0 13 17"><path d="M6.5,15.4 Q1,9.4 1,6.3 A5.5,5.5 0 0 1 12,6.3 Q12,9.4 6.5,15.4 Z" fill="none" stroke="#4b5565" stroke-width="1.3" stroke-linejoin="round"/><circle cx="6.5" cy="6.1" r="1.9" fill="none" stroke="#4b5565" stroke-width="1.2"/></svg>
<span class="t" style="left:167.00px;top:716.59px;font-size:15.6px;color:#36a3d9;transform:scaleX(0.9531);">253290725</span>
<span class="t" style="left:250.20px;top:717.01px;font-size:14.4px;color:#2d3648;transform:scaleX(0.8965);">3150 W REPUBLIC RD</span>
<div class="a" style="left:795px;top:712.0px;width:91.5px;height:23.8px;background:#f5f7fa;border:1px solid #e3e7ee;border-radius:4px"></div>
<span class="t" style="left:803.20px;top:716.96px;font-size:13.4px;color:#2d3648;-webkit-text-stroke:0.15px #2d3648;transform:scaleX(0.9148);">Exp: 12/23/25</span>
<svg style="left:888px;top:719.4px" width="14" height="10" viewBox="0 0 14 10"><path d="M1.2,2 L7,7.8 L12.8,2" fill="none" stroke="#2d3648" stroke-width="1.4"/></svg>
<div class="a" style="left:40px;top:740px;width:863px;height:9px;border-bottom:1px solid #dce2ec;border-radius:0 0 6px 6px"></div>
<div class="a" style="left:41.1px;top:766.2px;width:13.9px;height:13.9px;border:1.7px solid #bec7da;border-radius:3px;background:#fff"></div>
<div class="a" style="left:68px;top:764.5px;width:17px;height:17px;border-radius:50%;background:#dbe7da"></div>
<div class="a" style="left:71.8px;top:768.3px;width:9.4px;height:9.4px;border-radius:50%;background:#2e8b3e"></div>
<div class="a" style="left:93px;top:759.2px;width:27.8px;height:27.8px;border:1px solid #bcc3d3;border-radius:4px;background:#fff"></div>
<svg style="left:99px;top:764.2px" width="17" height="17" viewBox="0 0 17 17"><path d="M1.7,16.2 V1.2 M1.7,2.3 Q4.6,1.4 7.6,2.5 T14.3,2.2 V10.6 Q10.8,11.9 7.6,10.8 T1.7,10.9" fill="none" stroke="#3aa655" stroke-width="1.4" stroke-linejoin="round" stroke-linecap="round"/></svg>
<div class="a" style="left:129px;top:760.1px;width:25.8px;height:25.9px;border:1px solid #bcc3d3;border-radius:4px;background:#fff"></div>
<svg style="left:135.6px;top:764.7px" width="13" height="17" viewBox="0 0 13 17"><path d="M6.5,15.4 Q1,9.4 1,6.3 A5.5,5.5 0 0 1 12,6.3 Q12,9.4 6.5,15.4 Z" fill="none" stroke="#4b5565" stroke-width="1.3" stroke-linejoin="round"/><circle cx="6.5" cy="6.1" r="1.9" fill="none" stroke="#4b5565" stroke-width="1.2"/></svg>
<span class="t" style="left:167.00px;top:765.79px;font-size:15.6px;color:#36a3d9;transform:scaleX(0.9531);">253290722</span>
<span class="t" style="left:250.20px;top:766.21px;font-size:14.4px;color:#2d3648;transform:scaleX(0.9068);">S GOLDEN AVE</span>
<svg style="left:710.5px;top:764.4px" width="17" height="17" viewBox="0 0 17 17"><circle cx="8.5" cy="8.5" r="7.4" fill="none" stroke="#3aa655" stroke-width="1.3"/><path d="M5.2,8.8 L7.6,11.1 L11.9,6.4" fill="none" stroke="#3aa655" stroke-width="1.3" stroke-linecap="round" stroke-linejoin="round"/></svg>
<span class="t" style="left:735.00px;top:765.54px;font-size:14.6px;color:#3aa655;-webkit-text-stroke:0.45px #3aa655;transform:scaleX(1.0561);">Marked</span>
<div class="a" style="left:795px;top:761.2px;width:91.5px;height:23.8px;background:#f5f7fa;border:1px solid #e3e7ee;border-radius:4px"></div>
<span class="t" style="left:803.20px;top:766.16px;font-size:13.4px;color:#2d3648;-webkit-text-stroke:0.15px #2d3648;transform:scaleX(0.9148);">Exp: 12/23/25</span>
<svg style="left:888px;top:768.6px" width="14" height="10" viewBox="0 0 14 10"><path d="M1.2,7.8 L7,2 L12.8,7.8" fill="none" stroke="#2d3648" stroke-width="1.4"/></svg>
<div class="a" style="left:40px;top:796px;width:863px;height:1px;background:#dce2ec"></div>
<div class="a" style="left:40px;top:797px;width:648px;height:300px;background:#f8f9fb"></div>
<span class="t" style="left:56.40px;top:816.45px;font-size:14px;color:#2d3648;-webkit-text-stroke:0.55px #2d3648;transform:scaleX(0.9805);">MEDIACOM</span>
<span class="t" style="left:627.40px;top:814.00px;font-size:13px;color:#2d3648;transform:scaleX(1.0055);">Marked</span>
<span class="t" style="left:56.40px;top:852.45px;font-size:14px;color:#2d3648;-webkit-text-stroke:0.55px #2d3648;transform:scaleX(0.9641);">ATT TRANSMISSION</span>
<span class="t" style="left:570.30px;top:850.00px;font-size:13px;color:#2d3648;transform:scaleX(1.0558);">Clear/No conflict</span>
<span class="t" style="left:56.40px;top:888.45px;font-size:14px;color:#2d3648;-webkit-text-stroke:0.55px #2d3648;transform:scaleX(0.9126);">CITY UTILITIES ELECTRIC</span>
<span class="t" style="left:570.30px;top:886.00px;font-size:13px;color:#2d3648;transform:scaleX(1.0558);">Clear/No conflict</span>
<span class="t" style="left:56.40px;top:924.45px;font-size:14px;color:#2d3648;-webkit-text-stroke:0.55px #2d3648;transform:scaleX(0.9437);">OZARK ELECTRIC COOP</span>
<span class="t" style="left:570.30px;top:922.00px;font-size:13px;color:#2d3648;transform:scaleX(1.0558);">Clear/No conflict</span>
<span class="t" style="left:56.40px;top:960.45px;font-size:14px;color:#2d3648;-webkit-text-stroke:0.55px #2d3648;transform:scaleX(0.9764);">MNA-BLUEBIRD</span>
<span class="t" style="left:627.40px;top:958.00px;font-size:13px;color:#2d3648;transform:scaleX(1.0055);">Marked</span>
<span class="t" style="left:56.40px;top:996.45px;font-size:14px;color:#2d3648;-webkit-text-stroke:0.55px #2d3648;transform:scaleX(0.9611);">K-POWERNET</span>
<span class="t" style="left:627.40px;top:994.00px;font-size:13px;color:#2d3648;transform:scaleX(1.0055);">Marked</span>
<span class="t" style="left:56.40px;top:1032.45px;font-size:14px;color:#2d3648;-webkit-text-stroke:0.55px #2d3648;transform:scaleX(0.9568);">ATT DISTRIBUTION</span>
<span class="t" style="left:627.40px;top:1030.00px;font-size:13px;color:#2d3648;transform:scaleX(1.0055);">Marked</span>
<span class="t" style="left:56.40px;top:1068.45px;font-size:14px;color:#2d3648;-webkit-text-stroke:0.55px #2d3648;transform:scaleX(0.9306);">CITY UTILITIES GAS</span>
<span class="t" style="left:627.40px;top:1066.00px;font-size:13px;color:#2d3648;transform:scaleX(1.0055);">Marked</span>
<div class="a" style="left:704.2px;top:813.1px;width:82.5px;height:83.8px;background:#eff3f8;border-radius:7px"></div>
<svg style="left:704px;top:813px" width="84" height="85" viewBox="704 813 84 85"><rect x="709.1" y="817.7" width="72.8" height="74.2" rx="2.5" fill="none" stroke="#b4bcd0" stroke-width="1.7" stroke-linecap="round" stroke-dasharray="0.01 3.5"/></svg>
<svg style="left:737px;top:848px" width="17" height="14" viewBox="0 0 17 14"><rect x="0.7" y="0.7" width="15.6" height="12.6" rx="2" fill="none" stroke="#8d95a5" stroke-width="1.3"/><circle cx="4.6" cy="4.4" r="1.4" fill="#8d95a5"/><path d="M1.2,12.8 L6,7.4 L9,10.2 L11.6,7.8 L15.8,12.8 Z" fill="#8d95a5"/></svg>
<div class="a" style="left:765px;top:875.2px;width:19.6px;height:19.6px;border-radius:50%;background:#fff;box-shadow:0 1px 3px rgba(30,40,70,0.18)"></div>
<svg style="left:768.3px;top:878.5px" width="13" height="13" viewBox="0 0 13 13"><path d="M6.5,0.6 V12.4 M0.6,6.5 H12.4" stroke="#2d3648" stroke-width="1.3" fill="none"/></svg>
<div class="a" style="left:944.4px;top:528px;width:436.4px;height:290.6px;border:1px solid #dce2ec;border-radius:5px;background:#fff;box-shadow:0 1px 2px rgba(40,60,100,0.08)"></div>
<span class="t" style="left:961.40px;top:547.57px;font-size:14.8px;color:#2d3648;-webkit-text-stroke:0.4px #2d3648;transform:scaleX(1.0383);">Project Markups</span>
<svg style="left:1349px;top:549.5px" width="14" height="10" viewBox="0 0 14 10"><path d="M1.2,7.8 L7,2 L12.8,7.8" fill="none" stroke="#2d3648" stroke-width="1.4"/></svg>
<div class="a" style="left:945px;top:581px;width:435px;height:1px;background:#dce2ec"></div>
<span class="t" style="left:961.40px;top:602.89px;font-size:12.3px;color:#858d9e;-webkit-text-stroke:0.15px #858d9e;transform:scaleX(0.8900);">CLIENT MARKUPS</span>
<svg style="left:961px;top:628.4px" width="17" height="18" viewBox="0 0 17 18"><path d="M1.1,13.2 V3.3 Q1.1,1 3.4,1 H7.9 L11.8,4.9 V8.6" fill="none" stroke="#e53935" stroke-width="1.5" stroke-linejoin="round" stroke-linecap="round"/><path d="M7.7,1.1 V5.1 H11.7 Z" fill="#e53935"/><path d="M1.1,14.2 V15.4 Q1.1,16.5 2.3,16.5 H2.7" fill="none" stroke="#e53935" stroke-width="1.4" stroke-linecap="round"/><text x="4.1" y="16.6" font-size="6.8" font-weight="700" fill="#e53935" font-family="Liberation Sans, sans-serif" textLength="11.2" lengthAdjust="spacingAndGlyphs">PDF</text></svg>
<span class="t" style="left:985.50px;top:629.30px;font-size:15px;color:#36a3d9;">Client Submission 1</span>
<span class="t" style="left:1271.00px;top:630.20px;font-size:13px;color:#2d3648;-webkit-text-stroke:0.4px #2d3648;transform:scaleX(0.8977);">11/25/25, 8:11 AM</span>
<span class="t" style="left:961.40px;top:652.00px;font-size:13px;color:#2d3648;transform:scaleX(1.0278);">Need locates for areas highlighted yellow on prints 1 and 2.</span>
<span class="t" style="left:961.40px;top:704.19px;font-size:12.3px;color:#858d9e;-webkit-text-stroke:0.15px #858d9e;transform:scaleX(0.9234);">ADMIN MARKUPS</span>
<svg style="left:961px;top:729.6px" width="17" height="18" viewBox="0 0 17 18"><path d="M1.1,13.2 V3.3 Q1.1,1 3.4,1 H7.9 L11.8,4.9 V8.6" fill="none" stroke="#e53935" stroke-width="1.5" stroke-linejoin="round" stroke-linecap="round"/><path d="M7.7,1.1 V5.1 H11.7 Z" fill="#e53935"/><path d="M1.1,14.2 V15.4 Q1.1,16.5 2.3,16.5 H2.7" fill="none" stroke="#e53935" stroke-width="1.4" stroke-linecap="round"/><text x="4.1" y="16.6" font-size="6.8" font-weight="700" fill="#e53935" font-family="Liberation Sans, sans-serif" textLength="11.2" lengthAdjust="spacingAndGlyphs">PDF</text></svg>
<span class="t" style="left:985.50px;top:730.00px;font-size:15px;color:#36a3d9;transform:scaleX(0.9607);">Admin Rev 1</span>
<span class="t" style="left:1263.60px;top:731.40px;font-size:13px;color:#2d3648;-webkit-text-stroke:0.4px #2d3648;transform:scaleX(0.9602);">11/25/25, 9:09 AM</span>
<div class="a" style="left:945px;top:764px;width:435px;height:1px;background:#cfd6e2"></div>
<span class="t" style="left:961.40px;top:783.97px;font-size:14.8px;color:#2d3648;-webkit-text-stroke:0.4px #2d3648;transform:scaleX(1.0225);">Photos &amp; Videos</span>
<svg style="left:1349px;top:786.5px" width="14" height="10" viewBox="0 0 14 10"><path d="M1.2,2 L7,7.8 L12.8,2" fill="none" stroke="#2d3648" stroke-width="1.4"/></svg>
</body></html>
